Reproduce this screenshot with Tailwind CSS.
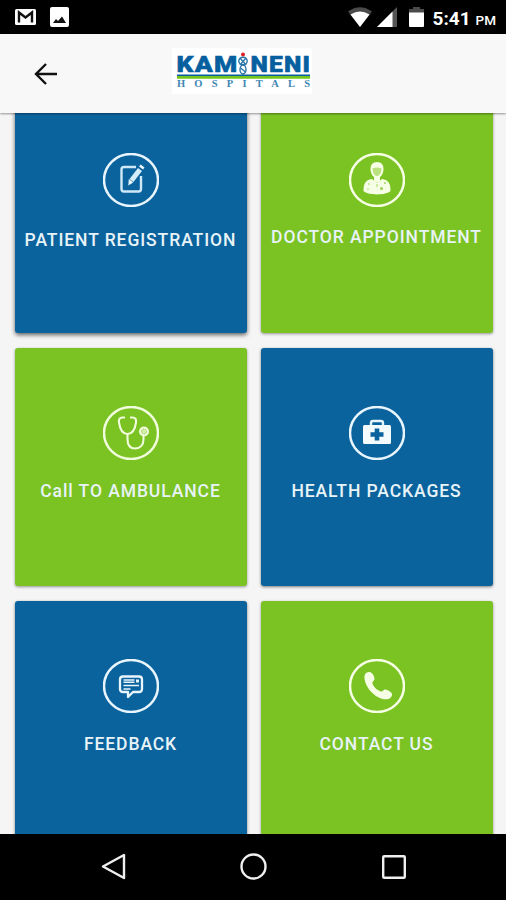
<!DOCTYPE html>
<html lang="en">
<head>
    <meta charset="UTF-8">
    <meta name="viewport" content="width=device-width, initial-scale=1.0">
    <script src="https://cdn.jsdelivr.net/npm/@tailwindcss/browser@4"></script>
    <title>Kamineni Hospitals</title>
</head>

<body class="flex flex-col h-[900px] w-[506px] overflow-hidden bg-[#f5f5f5] font-['Roboto',sans-serif]">
    <!-- status bar -->
    <div class="shrink-0 flex items-center justify-between h-[34px] pl-[15px] pr-2.5 bg-black text-white">
        <div class="flex items-center gap-3.5">
            <svg class="w-[21px] h-[18px]" viewBox="0 0 21 18">
                <rect y="1" width="21" height="16" rx="1.5" fill="#fff" />
                <path d="M4 14.5V4.5l6.5 5 6.5-5v10" fill="none" stroke="#111" stroke-width="2.4" />
            </svg>
            <svg class="w-[19px] h-5" viewBox="0 0 19 20">
                <rect width="19" height="20" rx="2" fill="#fff" />
                <path d="M3 16l3-4 2 2 4-4.500 4 6.500z" fill="#111" />
            </svg>
        </div>
        <div class="flex items-center">
            <svg class="w-6 h-5" viewBox="0 0 24 20">
                <path d="M0 4.500Q12-4 24 4.500L12 20z" fill="#4a4a4a" />
                <path d="M2.500 7.500Q12 1.500 21.500 7.500L12 20z" fill="#fff" />
            </svg>
            <svg class="ml-[5px] w-5 h-5" viewBox="0 0 20 20">
                <path d="M20 0v20H0z" fill="#555" />
                <path d="M15.500 4.500V20H0z" fill="#fff" />
            </svg>
            <svg class="ml-3 w-[15px] h-5" viewBox="0 0 15 20">
                <path d="M4 0h7v2h4v4H0V2h4z" fill="#4a4a4a" />
                <path d="M0 5.500h15V19a1 1 0 0 1-1 1H1a1 1 0 0 1-1-1z" fill="#fff" />
            </svg>
            <p class="ml-[9px] flex items-baseline gap-[5px] pt-0.5 leading-none">
                <span class="text-[19px] font-bold">5:41</span>
                <span class="text-[13.500px] font-medium">PM</span>
            </p>
        </div>
    </div>

    <!-- app bar -->
    <header class="z-10 shrink-0 relative flex items-center h-[79px] bg-[#f8f8f8] shadow-[0_1px_2px_rgba(0,0,0,0.4)]">
        <button class="ml-[34px]" aria-label="Back">
            <svg class="w-[23px] h-[22px]" viewBox="0 0 23 22" fill="none" stroke="#111" stroke-width="2.400">
                <path d="M12 1L2 11l10 10M2 11h21" />
            </svg>
        </button>
        <svg class="ml-[115px] -mt-[5px] w-[140px] h-[46px] bg-white" viewBox="0 0 140 46">
            <g fill="#06609f" stroke="#06609f" stroke-width=".5" font-family="Roboto, sans-serif" font-weight="900" font-size="21.500" letter-spacing="1">
                <text x="4.500" y="24.300" textLength="62" lengthAdjust="spacingAndGlyphs">KAM</text>
                <text x="78.500" y="24.300" textLength="60.500" lengthAdjust="spacingAndGlyphs">NENI</text>
            </g>
            <circle cx="71" cy="6.500" r="2" fill="#e02020" />
            <g fill="none" stroke="#2a76a8" stroke-width="1.400">
                <ellipse cx="71" cy="13" rx="4.200" ry="3.800" />
                <ellipse cx="71" cy="21.500" rx="3" ry="4.500" />
                <path d="M68 10l6 7M74 10l-6 7M68.500 20l5 4" />
            </g>
            <path d="M5 27.300h133" stroke="#06609f" stroke-width="1.400" />
            <path d="M5 29.400h133" stroke="#74c41c" stroke-width="2.800" />
            <text x="5" y="39.300" fill="#3f86b3" font-family="Liberation Serif, serif" font-weight="700" font-size="10.500" textLength="133">HOSPITALS</text>
        </svg>
    </header>

    <main class="grow min-h-0 overflow-hidden">
        <div class="-mt-[18px] grid grid-cols-2 auto-rows-[238px] gap-y-[15px] gap-x-3.5 pl-[14.500px] pr-[13.500px] text-center text-[17.500px] leading-5 font-medium tracking-[0.920px] text-[#e8f3f8] whitespace-nowrap">
            <a class="flex flex-col items-center pt-[58px] rounded-[3px] bg-[#0a639d] shadow-[0_2px_4px_rgba(0,0,0,0.6)]">
                <svg class="w-14 h-[54px]" viewBox="0 0 56 54" fill="none" stroke="#e9f5fd">
                    <ellipse cx="28" cy="27" rx="27" ry="26" stroke-width="2.500" />
                    <path d="M33 14H21q-2.500 0-2.500 2.500V36q0 2.500 2.500 2.500h14.500q2.500 0 2.500-2.500V23" stroke-width="2.400" stroke="#cfe8f7" />
                    <path d="M28.500 27.500l8.500-11" stroke="#d5edfa" stroke-width="5" />
                    <path d="M25.800 26l4.500 3.500-5 3z" fill="#e9f5fd" stroke="none" />
                    <path d="M38 15l1.600-2" stroke-width="5" />
                </svg>
                <span class="mt-[23px]">PATIENT REGISTRATION</span>
            </a>
            <a class="flex flex-col items-center pt-[58px] rounded-[3px] bg-[#7bc223] shadow-[0_1px_3px_rgba(0,0,0,0.4)]">
                <svg class="w-14 h-[54px]" viewBox="0 0 56 54" fill="none" stroke="#f6ffe6">
                    <ellipse cx="28" cy="27" rx="27" ry="26" stroke-width="2.500" />
                    <path d="M14.500 38c0-7 1.500-11 8.500-12l5 4 5-4c7 1 8.500 5 8.500 12-4 4.500-23 4.500-27 0z" fill="#f6ffe6" stroke="none" />
                    <path d="M21.500 16q0-7 6.500-7t6.500 7c0 5-3 9-6.500 9s-6.500-4-6.500-9z" fill="#f6ffe6" stroke="none" />
                    <path d="M23.500 15.500q4.500-2 9 0c0 4-2 7.500-4.500 7.500s-4.500-3.500-4.500-7.500z" fill="#b9e17d" stroke="none" />
                    <path d="M25 24v4l3 2 3-2v-4" fill="#f6ffe6" stroke="none" />
                    <g fill="#7bc223" stroke="none" opacity=".75">
                        <path d="M27.300 31h1.500v3h-1.500z" opacity=".6" />
                        <circle cx="32.500" cy="35.500" r="1.500" />
                        <circle cx="20" cy="31" r=".8" />
                        <circle cx="36" cy="30" r=".9" />
                        <circle cx="19" cy="36" r=".7" />
                    </g>
                </svg>
                <span class="mt-5">DOCTOR APPOINTMENT</span>
            </a>
            <a class="flex flex-col items-center pt-[58px] rounded-[3px] bg-[#7bc223] shadow-[0_1px_3px_rgba(0,0,0,0.4)]">
                <svg class="w-14 h-[54px]" viewBox="0 0 56 54" fill="none" stroke="#f0fcdc">
                    <ellipse cx="28" cy="27" rx="27" ry="26" stroke-width="2.500" />
                    <path d="M22 11.500h-2.500c-3 0-4 2-3.500 5 1 7 3.500 11.500 8.500 11.500s7.500-4.500 8.500-11.500c.500-3-.500-5-3.500-5H27" stroke-width="2.100" />
                    <path d="M24.500 28v5c0 6 2.500 9.500 7.500 9.500s8.500-3.500 8.500-9v-3.500" stroke-width="2.100" />
                    <circle cx="41" cy="25.500" r="5" fill="#f0fcdc" stroke="none" />
                    <circle cx="41" cy="25.500" r="2.500" fill="#d3efab" stroke="#96cf50" stroke-width="1" stroke-dasharray="1.500 1" />
                </svg>
                <span class="mt-[21px]">Call TO AMBULANCE</span>
            </a>
            <a class="flex flex-col items-center pt-[58px] rounded-[3px] bg-[#0a639d] shadow-[0_1px_3px_rgba(0,0,0,0.5)]">
                <svg class="w-14 h-[54px]" viewBox="0 0 56 54" fill="none" stroke="#e9f5fd">
                    <ellipse cx="28" cy="27" rx="27" ry="26" stroke-width="2.500" />
                    <path d="M22 20v-3q0-2 2-2h8q2 0 2 2v3" stroke-width="2.400" />
                    <rect x="14" y="19" width="28" height="19" rx="1.500" fill="#f4fbff" stroke="none" />
                    <path d="M28 22.500v12M21.500 28.500h13" stroke="#0a639d" stroke-width="4.600" />
                </svg>
                <span class="mt-[21px]">HEALTH PACKAGES</span>
            </a>
            <a class="flex flex-col items-center pt-[58px] rounded-[3px] bg-[#0a639d] shadow-[0_1px_3px_rgba(0,0,0,0.5)]">
                <svg class="w-14 h-[54px]" viewBox="0 0 56 54" fill="none" stroke="#e9f5fd">
                    <ellipse cx="28" cy="27" rx="27" ry="26" stroke-width="2.500" />
                    <path d="M20 17.500h16q3 0 3 3v9.500q0 3-3 3h-6l-5 5V33h-5q-3 0-3-3v-9.500q0-3 3-3z" stroke-width="2.300" stroke-linejoin="round" />
                    <path d="M20.500 21h11M20.500 23.300h11M20.500 26.500h15.500M20.500 30h7" stroke-width="1.600" />
                    <path d="M33 22h3" stroke-width="3" />
                </svg>
                <span class="mt-[21px]">FEEDBACK</span>
            </a>
            <a class="flex flex-col items-center pt-[58px] rounded-[3px] bg-[#7bc223] shadow-[0_1px_3px_rgba(0,0,0,0.4)]">
                <svg class="w-14 h-[54px]" viewBox="0 0 56 54" fill="none" stroke="#f6ffe6">
                    <ellipse cx="28" cy="27" rx="27" ry="26" stroke-width="2.500" />
                    <path d="M15.500 17c.500-3 3-4.500 5.500-4 2.500.700 4 4 4.500 6.500.300 2-2.500 3-2 5 1 3.500 5 7 8.500 8 2 .500 2.500-2.500 4.500-2 2.500.500 6 2.500 6.500 4.500.300 2.500-2 5-5 5.300-11 1-23.500-13-22.500-23.300z" fill="#f6ffe6" stroke="none" />
                </svg>
                <span class="mt-[21px]">CONTACT US</span>
            </a>
        </div>
    </main>

    <!-- navigation bar -->
    <nav class="z-10 shrink-0 flex items-center h-[66.500px] pl-[101px] bg-black">
        <svg class="w-[25px] h-[27px]" viewBox="0 0 25 27" fill="none" stroke="#f0f0f0" stroke-width="2.400" stroke-linejoin="round">
            <path d="M23 2v23L2 13.500z" />
        </svg>
        <svg class="ml-[114px] w-[27px] h-[27px]" viewBox="0 0 27 27" fill="none" stroke="#f0f0f0" stroke-width="2.400">
            <circle cx="13.500" cy="13.500" r="12" />
        </svg>
        <svg class="ml-[115px] w-6 h-6" viewBox="0 0 24 24" fill="none" stroke="#f0f0f0" stroke-width="2.400">
            <rect x="1.200" y="1.200" width="21.600" height="21.600" rx="1" />
        </svg>
    </nav>
</body>

</html>
